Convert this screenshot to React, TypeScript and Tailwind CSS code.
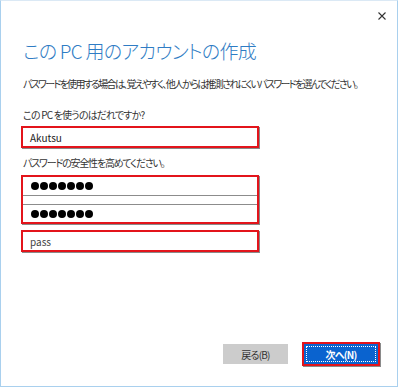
import React from "react";

const font = "font-['Noto_Sans_CJK_JP','Noto_Sans',sans-serif] [font-feature-settings:'palt']";

function Dots() {
  return (
    <div className="flex items-center gap-[1px]">
      {Array.from({ length: 7 }).map((_, i) => (
        <span key={i} className="block w-[8px] h-[8px] rounded-full bg-black" />
      ))}
    </div>
  );
}

export default function App() {
  return (
    <div className={`w-[400px] h-[387px] bg-white flex ${font}`}>
      <div className="w-[398px] h-[387px] border-l border-r border-b border-t border-t-[#dbe9f5] border-[#a9d0ee] flex flex-col">
        {/* close */}
        <div className="h-[19px] flex justify-end items-end pr-[11px]">
          <svg width="8" height="8" viewBox="0 0 8 8" className="text-[#333]">
            <path d="M0.5 0.5 L7.5 7.5 M7.5 0.5 L0.5 7.5" stroke="currentColor" strokeWidth="1.1" />
          </svg>
        </div>

        <div className="pl-[22px] flex flex-col">
          <h1 className="mt-[21px] text-[19px] leading-[20px] font-light text-[#2f7cc4] tracking-[-0.7px] whitespace-pre">
            この PC 用のアカウントの作成
          </h1>
          <p className="mt-[15px] text-[10px] leading-[16px] text-[#333] tracking-[-1.7px] whitespace-nowrap">
            パスワードを使用する場合は、覚えやすく、他人からは推測されにくいパスワードを選んでください。
          </p>
          <p className="mt-[15px] text-[10px] leading-[16px] text-[#333] tracking-[-0.8px] whitespace-pre">
            この PC を使うのはだれですか?
          </p>
          <div className="mt-[3px] -ml-[2px] w-[238px] h-[22px] border-2 border-[#e3141b] shadow-[1px_1px_0_#8a8a8a] flex items-center pl-[7px] text-[10px] text-[#222]">
            Akutsu
          </div>
          <p className="mt-[7px] text-[10px] leading-[16px] text-[#333] tracking-[-1.2px] whitespace-nowrap">
            パスワードの安全性を高めてください。
          </p>
          <div className="mt-[4px] -ml-[2px] w-[238px] h-[49px] border-2 border-[#e3141b] shadow-[1px_1px_0_#8a8a8a] flex flex-col">
            <div className="h-[19px] border-b border-[#8c8c8c] flex items-center pl-[8px]">
              <Dots />
            </div>
            <div className="h-[8px]" />
            <div className="flex-1 border-t border-[#8c8c8c] flex items-center pl-[8px]">
              <Dots />
            </div>
          </div>
          <div className="mt-[6px] -ml-[2px] w-[238px] h-[22px] border-2 border-[#e3141b] shadow-[1px_1px_0_#8a8a8a] flex items-center pl-[7px] text-[10px] text-[#444]">
            pass
          </div>
        </div>

        <div className="flex-1" />

        <div className="flex justify-end items-center gap-[14px] pr-[17px] pb-[20px]">
          <button className="w-[65px] h-[20px] bg-[#cccccc] text-[10px] tracking-[-0.8px] text-[#333] flex items-center justify-center">
            戻る(B)
          </button>
          <div className="w-[78px] h-[24px] border-2 border-[#e3141b] shadow-[1px_1px_0_#8a8a8a] bg-[#0a63cf] p-[2px]">
            <button className="w-full h-full border border-dotted border-white text-[10px] tracking-[-0.8px] font-bold text-white flex items-center justify-center">
              次へ(N)
            </button>
          </div>
        </div>
      </div>
    </div>
  );
}
